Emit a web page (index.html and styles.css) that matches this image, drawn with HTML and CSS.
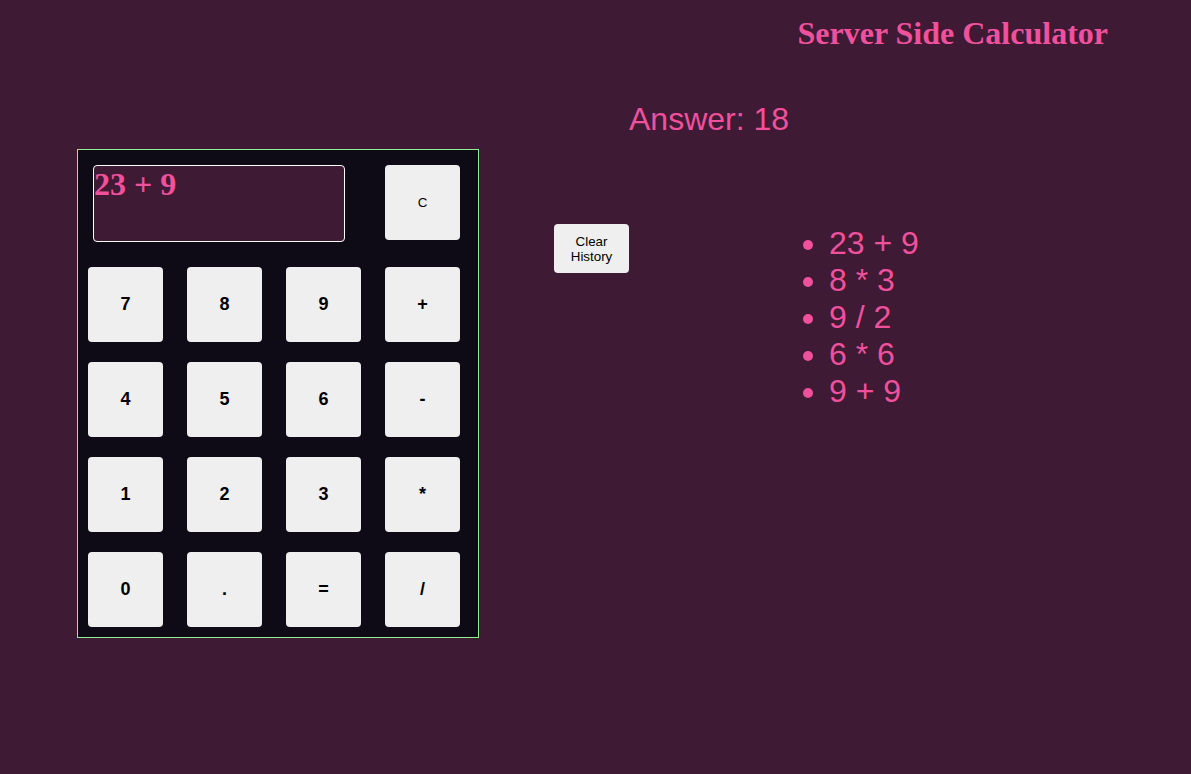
FILE: index.html
```html
<!DOCTYPE html>
<html>
<head>
<meta charset="utf-8">
<title>Server Side Calculator</title>
<link rel="stylesheet" href="styles.css">
</head>
<body>
  <header class="header">
    <h1 class="title">Server Side Calculator</h1>
  </header>
  <div class="answer">Answer: 18</div>
  <main class="main">
    <div class="calc">
      <div class="display">23 + 9</div>
      <button class="key key-clear">C</button>
      <button class="key">7</button>
      <button class="key">8</button>
      <button class="key">9</button>
      <button class="key">+</button>
      <button class="key">4</button>
      <button class="key">5</button>
      <button class="key">6</button>
      <button class="key">-</button>
      <button class="key">1</button>
      <button class="key">2</button>
      <button class="key">3</button>
      <button class="key">*</button>
      <button class="key">0</button>
      <button class="key">.</button>
      <button class="key">=</button>
      <button class="key">/</button>
    </div>
    <button class="clear-history">Clear<br>History</button>
    <ul class="history">
      <li>23 + 9</li>
      <li>8 * 3</li>
      <li>9 / 2</li>
      <li>6 * 6</li>
      <li>9 + 9</li>
    </ul>
  </main>
</body>
</html>
```

FILE: styles.css
```css
html, body {
  margin: 0;
  padding: 0;
}
body {
  background: #3e1a34;
  font-family: "Liberation Sans", Arial, sans-serif;
  color: #f0509c;
  min-height: 774px;
}
.header {
  display: flex;
  justify-content: flex-end;
  padding: 15px 83px 0 0;
}
.title {
  margin: 0;
  font-family: "Liberation Serif", "Times New Roman", serif;
  font-weight: bold;
  font-size: 32px;
  line-height: 37px;
  color: #f0509c;
}
.answer {
  margin: 49px 0 0 629px;
  font-size: 32px;
  line-height: 37px;
}
.main {
  display: flex;
  align-items: flex-start;
  margin-top: 11px;
  padding-left: 77px;
}
.calc {
  display: grid;
  grid-template-columns: repeat(4, 75px);
  grid-template-rows: 82px repeat(4, 75px);
  column-gap: 24px;
  row-gap: 20px;
  padding: 15px 18px 10px 10px;
  background: #0e0b16;
  border: 1px solid #90ee90;
}
.display {
  grid-column: 1 / span 3;
  justify-self: start;
  align-self: start;
  margin-left: 5px;
  width: 250px;
  height: 75px;
  border: 1px solid #ffffff;
  border-radius: 4px;
  background: #3e1a34;
  font-family: "Liberation Serif", "Times New Roman", serif;
  font-weight: bold;
  font-size: 32px;
  line-height: 37px;
  color: #f0509c;
  white-space: pre;
}
.key {
  width: 75px;
  height: 75px;
  border: none;
  border-radius: 4px;
  background: #efefef;
  color: #000;
  font-family: "Liberation Sans", Arial, sans-serif;
  font-weight: bold;
  font-size: 18px;
  padding: 0;
  align-self: start;
}
.key-clear {
  font-weight: normal;
  font-size: 13.33px;
}
.clear-history {
  margin: 75px 0 0 75px;
  width: 75px;
  height: 49px;
  border: none;
  border-radius: 4px;
  background: #efefef;
  color: #000;
  font-family: "Liberation Sans", Arial, sans-serif;
  font-size: 13.33px;
  line-height: 15px;
  padding: 0;
}
.history {
  margin: 76px 0 0 160px;
  padding-left: 40px;
  font-size: 32px;
  line-height: 37px;
}
```
